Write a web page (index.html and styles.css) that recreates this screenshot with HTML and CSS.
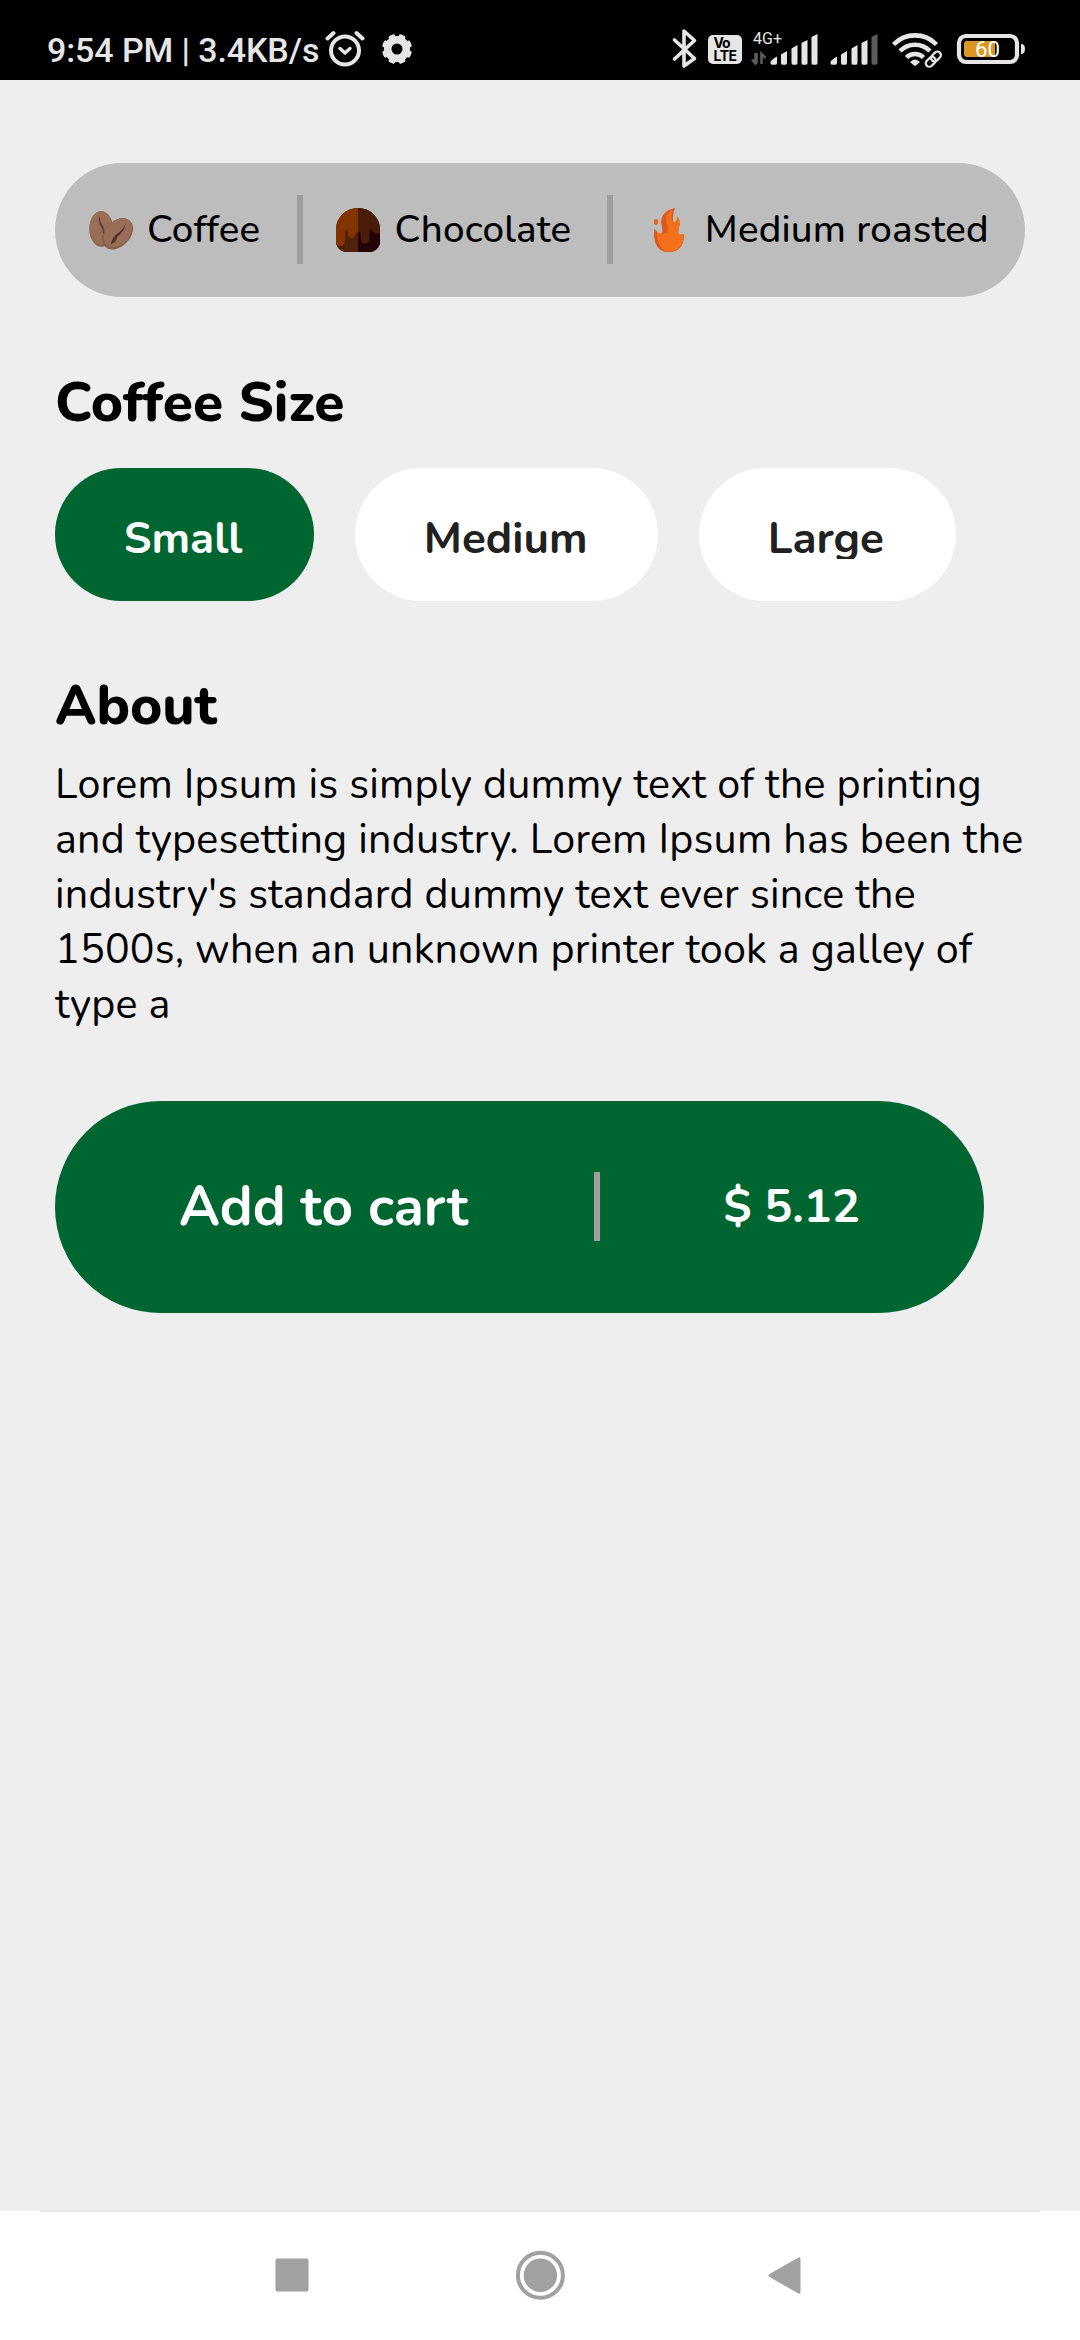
FILE: index.html
```html
<!DOCTYPE html>
<html lang="en">
<head>
<meta charset="utf-8">
<title>Coffee</title>
<link rel="stylesheet" href="styles.css">
</head>
<body>
<header class="status">
  <div class="status-left">
    <span class="clock">9:54 PM | 3.4KB/s</span>
    <svg class="alarm" width="40" height="38" viewBox="0 0 40 38" fill="none" stroke="#e6e6e6" stroke-linecap="round"><circle cx="20" cy="20.500" r="14" stroke-width="4"/><path d="M2.500 8.500 8.500 3M37.500 8.500 31.500 3" stroke-width="4"/><path d="M15 18.500l5 4.500 5-4.500" stroke-width="3.400" stroke-linejoin="round"/></svg>
    <svg class="gear" width="30" height="30" viewBox="0 0 30 30"><g fill="#e6e6e6"><circle cx="15" cy="15" r="13"/><rect x="11.500" y="0" width="7" height="30" rx="2" transform="rotate(22.500 15 15)"/><rect x="11.500" y="0" width="7" height="30" rx="2" transform="rotate(67.500 15 15)"/><rect x="11.500" y="0" width="7" height="30" rx="2" transform="rotate(112.500 15 15)"/><rect x="11.500" y="0" width="7" height="30" rx="2" transform="rotate(157.500 15 15)"/></g><circle cx="15" cy="15" r="5.500" fill="#000"/></svg>
  </div>
  <div class="status-right">
    <svg width="430" height="80" viewBox="0 0 430 80">
      <path d="M24.500 40 44.500 58.500 34 66V31l10.500 9.500L24.500 59" fill="none" stroke="#e6e6e6" stroke-width="3.600" stroke-linejoin="round" stroke-linecap="round"/>
      <rect x="58" y="35" width="34" height="29" rx="5" fill="#e6e6e6"/>
      <text x="63.500" y="48" class="volte" textLength="17">Vo</text>
      <text x="63.500" y="60.500" class="volte" textLength="23.500">LTE</text>
      <text x="103" y="44" class="net" textLength="29" lengthAdjust="spacingAndGlyphs">4G+</text>
      <path d="M105.500 53v10M102 59.500l3.500 4 1-1V53M111.500 64V54l4 4" fill="none" stroke="#5c5c5c" stroke-width="2.600"/>
      <g fill="#e6e6e6">
        <path d="M120.500 62q0-1.500 6.500-5.500v6.500q0 1.700-1.500 1.700h-3.500q-1.500 0-1.500-1.700z"/>
        <path d="M131 54.500l6-3.500v12q0 1.700-1.500 1.700h-3q-1.500 0-1.500-1.700zM141.500 48.500l6-3.500v18q0 1.700-1.500 1.700h-3q-1.500 0-1.500-1.700zM151.500 43l6-3v23q0 1.700-1.500 1.700h-3q-1.500 0-1.500-1.700zM161.500 37l6-3v29q0 1.700-1.500 1.700h-3q-1.500 0-1.500-1.700z"/>
        <path d="M180.500 62q0-1.500 6.500-5.500v6.500q0 1.700-1.500 1.700h-3.500q-1.500 0-1.500-1.700zM191 54.500l6-3.500v12q0 1.700-1.500 1.700h-3q-1.500 0-1.500-1.700zM201.500 48.500l6-3.500v18q0 1.700-1.500 1.700h-3q-1.500 0-1.500-1.700zM211.500 43l6-3v23q0 1.700-1.500 1.700h-3q-1.500 0-1.500-1.700z"/>
        <path d="M221.500 37l6-3v29q0 1.700-1.500 1.700h-3q-1.500 0-1.500-1.700z" fill="#5c5c5c"/>
      </g>
      <g fill="none" stroke="#e6e6e6" stroke-width="4.600"><path d="M243.500 44.500a30 30 0 0 1 43 0M250 51a21 21 0 0 1 30 0M256.500 57.500a12 12 0 0 1 17 0"/></g>
      <path d="M260 62q5-5 10 0l-4 3.500q-1 .7-2 0z" fill="#e6e6e6"/>
      <g fill="none" stroke="#e6e6e6" stroke-width="2.200"><rect x="-5.500" y="-3.500" width="11" height="7" rx="3.500" transform="translate(280.700 61.800) rotate(-45)"/><rect x="-5.500" y="-3.500" width="11" height="7" rx="3.500" transform="translate(286 56.500) rotate(-45)"/></g>
      <rect x="309" y="36" width="58" height="26" rx="7" fill="none" stroke="#e6e6e6" stroke-width="4.200"/>
      <rect x="314" y="41" width="31" height="16" rx="3" fill="#db9623"/>
      <text x="325" y="57" class="battery" textLength="25" lengthAdjust="spacingAndGlyphs">60</text>
      <path d="M371 44q4 0 4 5t-4 5z" fill="#e6e6e6"/>
    </svg>
  </div>
</header>
<main class="screen">
  <section class="traits">
    <div class="trait trait-coffee">
      <svg width="44" height="44" viewBox="0 0 44 44"><ellipse cx="12.300" cy="21" rx="12" ry="17.800" fill="#8c6550"/><ellipse cx="12" cy="20" rx="11.500" ry="16.800" fill="#9a6d57"/><path d="M10.500 8q-2 6 1.500 11t1 11l2.500-5q0-5-1.500-7-3-4-3.500-10z" fill="#623f3b"/><g transform="rotate(43 28.700 25.800)"><ellipse cx="28.700" cy="25.800" rx="12.500" ry="18" fill="#86604c"/><ellipse cx="28" cy="24.800" rx="11.500" ry="16.500" fill="#9a6d57"/></g><path d="M36.500 15.500q-3 7-8 10t-7 11q6-2 7-8 7-5 8-13z" fill="#54332f"/></svg>
      <span class="trait-label">Coffee</span>
    </div>
    <i class="rule"></i>
    <div class="trait trait-chocolate">
      <svg width="44" height="44" viewBox="0 0 44 44"><path d="M22 0A22 21 0 0 0 0 21v15q2 6 8 8h14z" fill="#4f230b"/><path d="M22 0A22 21 0 0 1 44 21v15q-2 6-8 8H22z" fill="#250009"/><path d="M22 0A22 21 0 0 0 0 21v15q1 2 4 2 5 0 5-5V22q3 0 3 4 0 4 4 4 3 0 3-4l3-2z" fill="#833300"/><path d="M22 0A22 21 0 0 1 44 21v4q-6 2-9-4-1.500 0-1.500 4v6q0 4-4 4.500-5 0-5-5.500v-5q0-2-2.500-1z" fill="#491d0a"/></svg>
      <span class="trait-label">Chocolate</span>
    </div>
    <i class="rule"></i>
    <div class="trait trait-roast">
      <svg width="30" height="44" viewBox="0 0 30 44"><path d="M21 0Q7 3 7 15q2 6 1 10-4 2-5-2l-3-2v8q1 12 11 15h4q13 0 15-14v-4q-5 2-6-1l1-9q-3 4-6 0V9q0-5 2-9z" fill="#e0591c"/><path d="M21 0Q11 6 12 14q3 5 1 10-5 4-10 0 0 17 12 20 14-1 15-18-5 2-6-1 0-4 2-8 0-6-3-9 0 5-2 6-7-3-1-14z" fill="#f3711b"/><ellipse cx="2" cy="14" rx="2.200" ry="3" fill="#e8641c"/></svg>
      <span class="trait-label">Medium roasted</span>
    </div>
  </section>
  <h2 class="heading heading-size">Coffee Size</h2>
  <section class="sizes">
    <div class="size size-small selected"><span class="size-label">Small</span></div>
    <div class="size size-medium"><span class="size-label">Medium</span></div>
    <div class="size size-large"><span class="size-label">Large</span></div>
  </section>
  <h2 class="heading heading-about">About</h2>
  <p class="about">Lorem Ipsum is simply dummy text of the printing<br>and typesetting industry. Lorem Ipsum has been the<br>industry's standard dummy text ever since the<br>1500s, when an unknown printer took a galley of<br>type a</p>
  <div class="cart">
    <span class="cart-label">Add to cart</span>
    <i class="rule"></i>
    <span class="price">$ 5.12</span>
  </div>
</main>
<nav class="navbar">
  <svg width="1080" height="129" viewBox="0 0 1080 129" fill="#a1a1a1"><rect x="275.500" y="47.500" width="33" height="33" rx="2"/><circle cx="540.400" cy="64.300" r="22.500" fill="none" stroke="#a1a1a1" stroke-width="4"/><circle cx="540.400" cy="64.300" r="16.700"/><path d="M769.500 63l29-16.500q2-1 2 1.500v33q0 2.500-2 1.500l-29-16.500q-2-1.500 0-3z"/></svg>
</nav>
</body>
</html>
```
FILE: styles.css
```css
* { box-sizing: border-box; }
body {
  margin: 0;
  width: 1080px;
  height: 2340px;
  display: flex;
  flex-direction: column;
  background: #eee;
  color: #000;
  font-family: Nunito, Lato, sans-serif;
  overflow: hidden;
}
svg { display: block; flex: none; }
.status {
  height: 80px;
  flex: none;
  display: flex;
  justify-content: space-between;
  background: #000;
  color: #e6e6e6;
}
.status-left { display: flex; align-items: flex-start; padding-left: 47px; }
.clock {
  font: 500 34px/40px Roboto, sans-serif;
  letter-spacing: -.1px;
  margin-top: 30px;
  width: 271px;
  white-space: nowrap;
}
.alarm { margin: 30px 0 0 7px; }
.gear { margin: 34px 0 0 17px; }
.volte { font: 700 14px Inter, sans-serif; fill: #000; }
.net { font: 400 17px Roboto, sans-serif; fill: #e6e6e6; }
.battery { font: 400 22px Roboto, sans-serif; fill: #fff; }

.screen { flex: 1; padding: 82.5px 55px 0; }
.traits {
  height: 134.5px;
  width: 970px;
  display: flex;
  align-items: center;
  border-radius: 67.25px;
  background: #bdbdbd;
  padding-left: 34px;
}
.trait { display: flex; align-items: center; flex: none; }
.trait-label {
  font-size: 38.5px;
  font-weight: 500;
  letter-spacing: .2px;
  line-height: 53px;
  white-space: nowrap;
}
.trait-coffee { width: 207.5px; gap: 14px; }
.trait-chocolate { width: 304.5px; padding-left: 33.5px; gap: 14.5px; }
.trait-roast { padding-left: 41px; gap: 20.7px; }
.rule { width: 6px; height: 69px; flex: none; background: #9e9e9e; }

.heading { margin: 0; font-size: 55px; font-weight: 800; line-height: 75px; white-space: nowrap; }
.heading-size { margin-top: 68px; }
.sizes { display: flex; gap: 41.5px; margin-top: 28px; }
.size {
  height: 132.5px;
  border-radius: 66.25px;
  background: #fff;
  color: #212121;
  font-size: 44px;
  font-weight: 700;
  line-height: 60px;
  padding: 41px 0 0 68.75px;
}
/* the label box is shorter than its line, so descenders are cut */
.size-label { display: block; height: 50px; overflow: hidden; }
.size.selected { background: #006631; color: #fff; }
.size-small { width: 258.5px; }
.size-medium { width: 302.5px; }
.size-large { width: 256.5px; }
.heading-about { margin-top: 67px; }
.about {
  margin: 14.5px 0 0;
  font-size: 41.25px;
  letter-spacing: .2px;
  line-height: 55px;
  white-space: nowrap;
}
.cart {
  width: 929px;
  height: 212px;
  margin-top: 68.5px;
  display: flex;
  align-items: center;
  border-radius: 106px;
  background: #006631;
  color: #fff;
  padding-left: 124px;
}
.cart-label { width: 414.5px; font-size: 55px; font-weight: 700; }
.price { margin-left: 124px; font-size: 46.75px; font-weight: 700; }
.navbar { height: 129px; flex: none; background: #fff; }
.navbar::before { content: ""; display: block; height: 1px; margin: 0 40px -1px; background: #e2e2e2; }
```
